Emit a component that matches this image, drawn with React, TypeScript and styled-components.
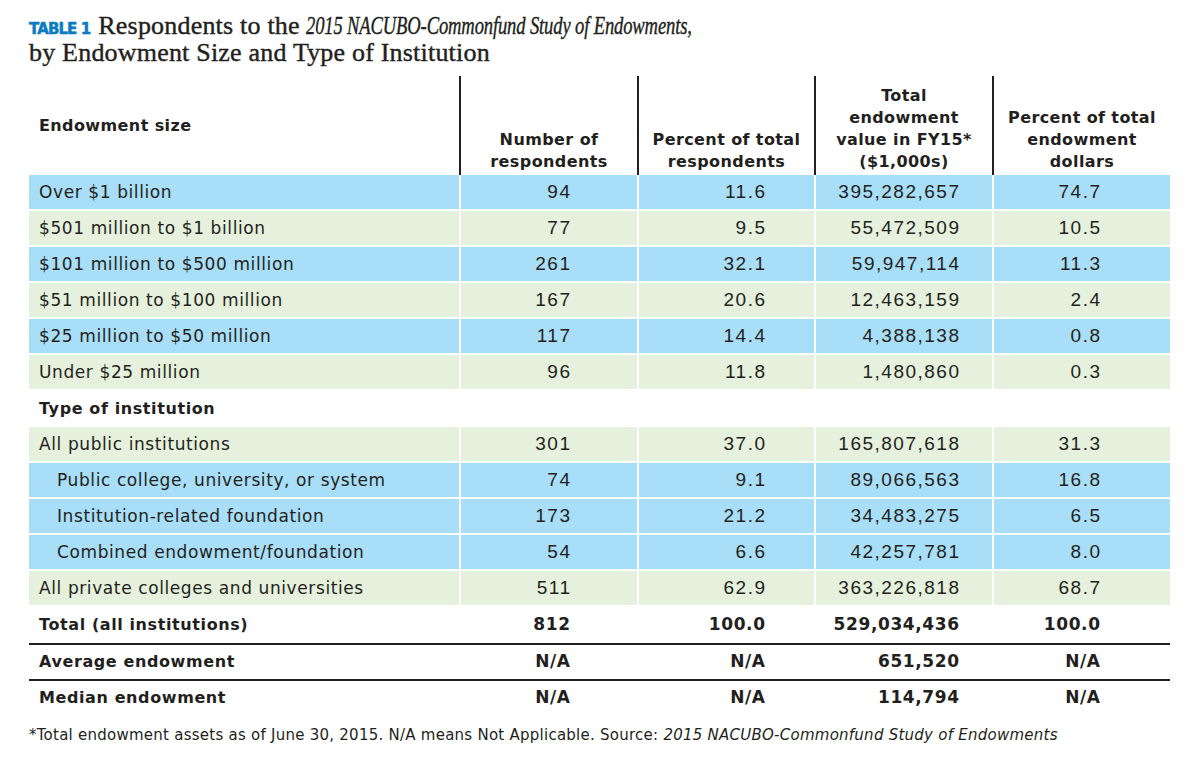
import styled, { createGlobalStyle } from "styled-components";

const GlobalStyle = createGlobalStyle`
  body {
    margin: 0;
    background: #ffffff;
    color: #231f20;
    font-family: "DejaVu Sans", "Open Sans", sans-serif;
  }
`;

const Page = styled.div`
  width: 1200px;
  height: 760px;
  padding: 14px 30px 0 29px;
  box-sizing: border-box;
`;

const Title = styled.h1`
  margin: 0;
  font-family: "Liberation Serif", serif;
  font-weight: normal;
  font-size: 26px;
  line-height: 24px;
  letter-spacing: 0.2px;
  color: #231f20;
  -webkit-text-stroke: 0.4px #231f20;
  white-space: nowrap;
`;

const TableTag = styled.span`
  font-family: "DejaVu Sans", sans-serif;
  font-weight: 700;
  font-size: 15px;
  color: #0a7bc1;
  -webkit-text-stroke: 0.5px #0a7bc1;
  margin-right: 8px;
  letter-spacing: -0.9px;
`;

const TitleItalic = styled.em`
  display: inline-block;
  font-style: italic;
  letter-spacing: -0.2px;
  transform: scaleX(0.715);
  transform-origin: 0 0;
  margin-right: -152px;
`;

const Table = styled.div`
  margin-top: 11px;
  display: grid;
  grid-template-columns: 430px 178px 177px 178px 178px;
`;

const HeadCell = styled.div<{ $left?: boolean; $line?: boolean }>`
  height: 99px;
  display: flex;
  align-items: ${(p) => (p.$left ? "center" : "flex-end")};
  justify-content: ${(p) => (p.$left ? "flex-start" : "center")};
  text-align: center;
  padding: ${(p) => (p.$left ? "0 0 0 10px" : "0 2px 2px")};
  box-sizing: border-box;
  font-weight: 700;
  font-size: 16px;
  letter-spacing: 0.4px;
  line-height: 22px;
  border-left: ${(p) => (p.$line ? "2px solid #231f20" : "none")};
`;

const Row = styled.div<{ $rule?: boolean }>`
  grid-column: 1 / -1;
  display: grid;
  grid-template-columns: subgrid;
  height: 36px;
  box-sizing: border-box;
  border-top: ${(p) => (p.$rule ? "2px solid #231f20" : "none")};
`;

const tones: Record<string, string> = {
  blue: "#a8def7",
  green: "#e5f1dc",
  none: "transparent",
};

const Cell = styled.div<{ $tone: string; $first?: boolean; $bold?: boolean; $indent?: boolean; $pad?: number }>`
  background: ${(p) => tones[p.$tone]};
  margin: 0 0 2px ${(p) => (p.$first ? "0" : "2px")};
  display: flex;
  align-items: center;
  justify-content: ${(p) => (p.$first ? "flex-start" : "flex-end")};
  padding: ${(p) => (p.$first ? `0 0 0 ${p.$indent ? 28 : 10}px` : `0 ${p.$pad}px 0 0`)};
  font-size: ${(p) => (p.$bold ? 16 : 17)}px;
  font-weight: ${(p) => (p.$bold ? 700 : 400)};
  letter-spacing: ${(p) => (p.$bold ? 0.6 : 0.6)}px;
`;

const Num = styled.span`
  font-family: "Liberation Sans", sans-serif;
  font-size: 19px;
  letter-spacing: 1.5px;
  margin-right: -1.5px;
`;

const BoldNum = styled.span`
  font-size: 17px;
  letter-spacing: 0.6px;
  margin-right: -0.6px;
`;

const Footnote = styled.p`
  margin: 11px 0 0 0;
  font-size: 15px;
  letter-spacing: 0.25px;
  color: #231f20;
  em {
    font-style: italic;
  }
`;

type RowData = {
  label: string;
  values: string[];
  tone: "blue" | "green" | "none";
  indent?: boolean;
  bold?: boolean;
  rule?: boolean;
};

const rows: RowData[] = [
  { label: "Over $1 billion", values: ["94", "11.6", "395,282,657", "74.7"], tone: "blue" },
  { label: "$501 million to $1 billion", values: ["77", "9.5", "55,472,509", "10.5"], tone: "green" },
  { label: "$101 million to $500 million", values: ["261", "32.1", "59,947,114", "11.3"], tone: "blue" },
  { label: "$51 million to $100 million", values: ["167", "20.6", "12,463,159", "2.4"], tone: "green" },
  { label: "$25 million to $50 million", values: ["117", "14.4", "4,388,138", "0.8"], tone: "blue" },
  { label: "Under $25 million", values: ["96", "11.8", "1,480,860", "0.3"], tone: "green" },
  { label: "Type of institution", values: ["", "", "", ""], tone: "none", bold: true },
  { label: "All public institutions", values: ["301", "37.0", "165,807,618", "31.3"], tone: "green" },
  { label: "Public college, university, or system", values: ["74", "9.1", "89,066,563", "16.8"], tone: "blue", indent: true },
  { label: "Institution-related foundation", values: ["173", "21.2", "34,483,275", "6.5"], tone: "blue", indent: true },
  { label: "Combined endowment/foundation", values: ["54", "6.6", "42,257,781", "8.0"], tone: "blue", indent: true },
  { label: "All private colleges and universities", values: ["511", "62.9", "363,226,818", "68.7"], tone: "green" },
  { label: "Total (all institutions)", values: ["812", "100.0", "529,034,436", "100.0"], tone: "none", bold: true },
  { label: "Average endowment", values: ["N/A", "N/A", "651,520", "N/A"], tone: "none", bold: true, rule: true },
  { label: "Median endowment", values: ["N/A", "N/A", "114,794", "N/A"], tone: "none", bold: true, rule: true },
];

const pads = [67, 49, 33, 70];

export default function App() {
  return (
    <Page>
      <GlobalStyle />
      <Title>
        <TableTag>TABLE 1</TableTag>
        Respondents to the <TitleItalic>2015 NACUBO-Commonfund Study of Endowments,</TitleItalic>
        <br />
        by Endowment Size and Type of Institution
      </Title>
      <Table>
        <HeadCell $left>Endowment size</HeadCell>
        <HeadCell $line>
          Number of
          <br />
          respondents
        </HeadCell>
        <HeadCell $line>
          Percent of total
          <br />
          respondents
        </HeadCell>
        <HeadCell $line>
          Total
          <br />
          endowment
          <br />
          value in FY15*
          <br />
          ($1,000s)
        </HeadCell>
        <HeadCell $line>
          Percent of total
          <br />
          endowment
          <br />
          dollars
        </HeadCell>
        {rows.map((r) => (
          <Row key={r.label} $rule={r.rule}>
            <Cell $tone={r.tone} $first $bold={r.bold} $indent={r.indent}>
              {r.label}
            </Cell>
            {r.values.map((v, i) => (
              <Cell key={i} $tone={r.tone} $bold={r.bold} $pad={pads[i]}>
                {r.bold ? <BoldNum>{v}</BoldNum> : <Num>{v}</Num>}
              </Cell>
            ))}
          </Row>
        ))}
      </Table>
      <Footnote>
        *Total endowment assets as of June 30, 2015. N/A means Not Applicable. Source:{" "}
        <em>2015 NACUBO-Commonfund Study of Endowments</em>
      </Footnote>
    </Page>
  );
}
